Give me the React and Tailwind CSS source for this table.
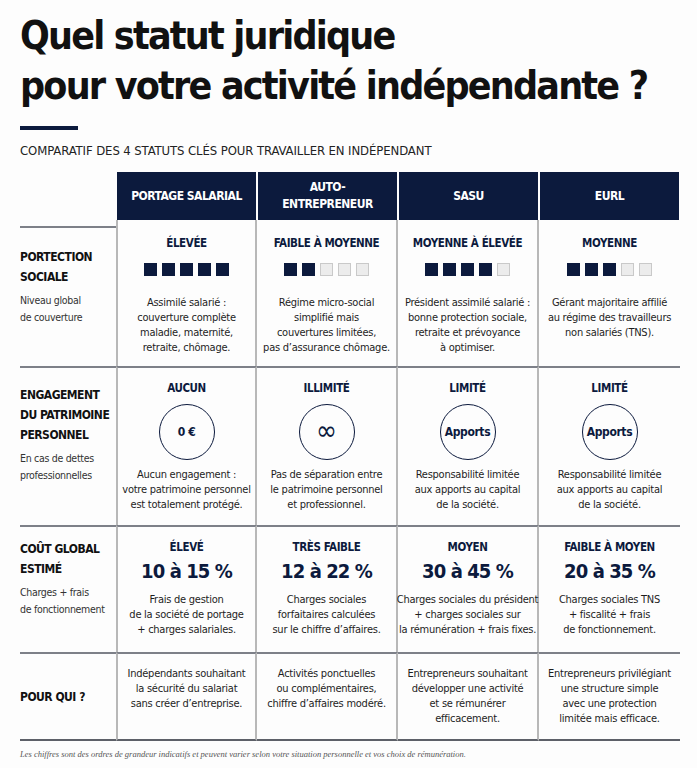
const NARROW = "font-['DejaVu_Sans_Condensed','DejaVu_Sans',sans-serif] font-stretch-condensed";

const HEADERS = [["PORTAGE SALARIAL"], ["AUTO-", "ENTREPRENEUR"], ["SASU"], ["EURL"]];

const PROTECTION = [
  { level: "ÉLEVÉE", filled: 5, text: ["Assimilé salarié :", "couverture complète", "maladie, maternité,", "retraite, chômage."] },
  { level: "FAIBLE À MOYENNE", filled: 2, text: ["Régime micro-social", "simplifié mais", "couvertures limitées,", "pas d’assurance chômage."] },
  { level: "MOYENNE À ÉLEVÉE", filled: 4, text: ["Président assimilé salarié :", "bonne protection sociale,", "retraite et prévoyance", "à optimiser."] },
  { level: "MOYENNE", filled: 3, text: ["Gérant majoritaire affilié", "au régime des travailleurs", "non salariés (TNS)."] },
];

const PATRIMOINE = [
  { level: "AUCUN", badge: "0 €", text: ["Aucun engagement :", "votre patrimoine personnel", "est totalement protégé."] },
  { level: "ILLIMITÉ", badge: "∞", text: ["Pas de séparation entre", "le patrimoine personnel", "et professionnel."] },
  { level: "LIMITÉ", badge: "Apports", text: ["Responsabilité limitée", "aux apports au capital", "de la société."] },
  { level: "LIMITÉ", badge: "Apports", text: ["Responsabilité limitée", "aux apports au capital", "de la société."] },
];

const COUT = [
  { level: "ÉLEVÉ", pct: "10 à 15 %", text: ["Frais de gestion", "de la société de portage", "+ charges salariales."] },
  { level: "TRÈS FAIBLE", pct: "12 à 22 %", text: ["Charges sociales", "forfaitaires calculées", "sur le chiffre d’affaires."] },
  { level: "MOYEN", pct: "30 à 45 %", text: ["Charges sociales du président", "+ charges sociales sur", "la rémunération + frais fixes."] },
  { level: "FAIBLE À MOYEN", pct: "20 à 35 %", text: ["Charges sociales TNS", "+ fiscalité + frais", "de fonctionnement."] },
];

const POUR_QUI = [
  ["Indépendants souhaitant", "la sécurité du salariat", "sans créer d’entreprise."],
  ["Activités ponctuelles", "ou complémentaires,", "chiffre d’affaires modéré."],
  ["Entrepreneurs souhaitant", "développer une activité", "et se rémunérer", "efficacement."],
  ["Entrepreneurs privilégiant", "une structure simple", "avec une protection", "limitée mais efficace."],
];

function Lines({ lines }) {
  return lines.map((l, i) => (
    <div key={i} className="whitespace-nowrap">
      {l}
    </div>
  ));
}

function Desc({ lines, className = "" }) {
  return (
    <div className={`text-[11px] leading-[15px] tracking-[-0.25px] text-[#1e1e1e] text-center ${className}`}>
      <Lines lines={lines} />
    </div>
  );
}

function Level({ children }) {
  return <div className="text-[11.5px] leading-[16px] tracking-[-0.4px] font-bold text-[#0c1a3d]">{children}</div>;
}

function Squares({ filled }) {
  return (
    <div className="flex gap-[5px] justify-center mt-[12px]">
      {[0, 1, 2, 3, 4].map((i) =>
        i < filled ? (
          <span key={i} className="w-[13px] h-[13px] bg-[#0c1a3d]" />
        ) : (
          <span key={i} className="w-[13px] h-[13px] bg-[#ececec] border border-[#c9c9c9]" />
        )
      )}
    </div>
  );
}

function Label({ title, sub }) {
  return (
    <div className="pr-1">
      <div className="text-[12px] leading-[20px] tracking-[-0.5px] font-bold text-[#111]">
        <Lines lines={title} />
      </div>
      {sub && (
        <div className="text-[10.5px] leading-[17px] tracking-[-0.3px] text-[#333] mt-[5px]">
          <Lines lines={sub} />
        </div>
      )}
    </div>
  );
}

export default function App() {
  return (
    <div className={`w-[697px] h-[768px] bg-[#fdfdfd] pt-[11px] pl-[20px] ${NARROW}`}>
      <h1 className="text-[39px] leading-[50px] font-bold text-[#111] tracking-[-1.8px]">
        Quel statut juridique
        <br />
        pour votre activité indépendante ?
      </h1>
      <div className="w-[58px] h-[4px] bg-[#0c1a3d] mt-[15px]" />
      <p className="text-[13px] leading-[16px] tracking-[-0.1px] text-[#222] mt-[13px]">
        COMPARATIF DES 4 STATUTS CLÉS POUR TRAVAILLER EN INDÉPENDANT
      </p>

      <div className="grid grid-cols-[96px_repeat(4,141px)] mt-[13px]">
        {/* en-têtes */}
        <div />
        {HEADERS.map((h, i) => (
          <div
            key={i}
            className="h-[48px] mx-px bg-[#0c1a3d] text-white font-bold text-[12px] tracking-[-0.5px] leading-[17px] flex flex-col items-center justify-center text-center"
          >
            <Lines lines={h} />
          </div>
        ))}

        {/* protection sociale */}
        <div className="h-[146px] pt-[6px]">
          <div className="border-t-2 border-[#7d8088] pt-[19px]">
            <Label title={["PORTECTION", "SOCIALE"]} sub={["Niveau global", "de couverture"]} />
          </div>
        </div>
        {PROTECTION.map((c, i) => (
          <div key={i} className={`h-[146px] pt-[15px] flex flex-col items-center ${i < 3 ? "border-r-2" : ""} ${i === 0 ? "border-l-2" : ""} border-[#b8b8b8]`}>
            <Level>{c.level}</Level>
            <Squares filled={c.filled} />
            <Desc lines={c.text} className="mt-[19px]" />
          </div>
        ))}

        {/* patrimoine */}
        <div className="h-[159px] border-t-2 border-[#7d8088] pt-[17px]">
          <Label title={["ENGAGEMENT", "DU PATRIMOINE", "PERSONNEL"]} sub={["En cas de dettes", "professionnelles"]} />
        </div>
        {PATRIMOINE.map((c, i) => (
          <div key={i} className={`h-[159px] pt-[12px] flex flex-col items-center border-t-2 border-t-[#7d8088] ${i < 3 ? "border-r-2" : ""} ${i === 0 ? "border-l-2" : ""} border-x-[#b8b8b8]`}>
            <Level>{c.level}</Level>
            <div className="mt-[8px] w-[56px] h-[56px] rounded-full border-[1.5px] border-[#0c1a3d] flex items-center justify-center font-bold text-[#0c1a3d]">
              {c.badge === "∞" ? (
                <span className="text-[28px] leading-none font-normal -mt-[3px]">∞</span>
              ) : (
                <span className="text-[12px] tracking-[-0.4px]">{c.badge}</span>
              )}
            </div>
            <Desc lines={c.text} className="mt-[7px]" />
          </div>
        ))}

        {/* coût */}
        <div className="h-[127px] border-t-2 border-[#7d8088] pt-[12px]">
          <Label title={["COÛT GLOBAL", "ESTIMÉ"]} sub={["Charges + frais", "de fonctionnement"]} />
        </div>
        {COUT.map((c, i) => (
          <div key={i} className={`h-[127px] pt-[12px] flex flex-col items-center border-t-2 border-t-[#7d8088] ${i < 3 ? "border-r-2" : ""} ${i === 0 ? "border-l-2" : ""} border-x-[#b8b8b8]`}>
            <Level>{c.level}</Level>
            <div className="text-[20px] leading-[28px] tracking-[-0.9px] font-bold text-[#0c1a3d] mt-[2px]">{c.pct}</div>
            <Desc lines={c.text} className="mt-[7px]" />
          </div>
        ))}

        {/* pour qui */}
        <div className="h-[89px] border-y-2 border-t-[#7d8088] border-b-[#5d6068] flex items-center">
          <Label title={["POUR QUI ?"]} />
        </div>
        {POUR_QUI.map((t, i) => (
          <div key={i} className={`h-[89px] pt-[12px] flex flex-col items-center border-y-2 border-t-[#7d8088] border-b-[#5d6068] ${i < 3 ? "border-r-2" : ""} ${i === 0 ? "border-l-2" : ""} border-x-[#b8b8b8]`}>
            <Desc lines={t} />
          </div>
        ))}
      </div>

      <p className="mt-[7px] text-[8.5px] italic text-[#555] font-['Liberation_Serif',serif]">
        Les chiffres sont des ordres de grandeur indicatifs et peuvent varier selon votre situation personnelle et vos choix de rémunération.
      </p>
    </div>
  );
}
